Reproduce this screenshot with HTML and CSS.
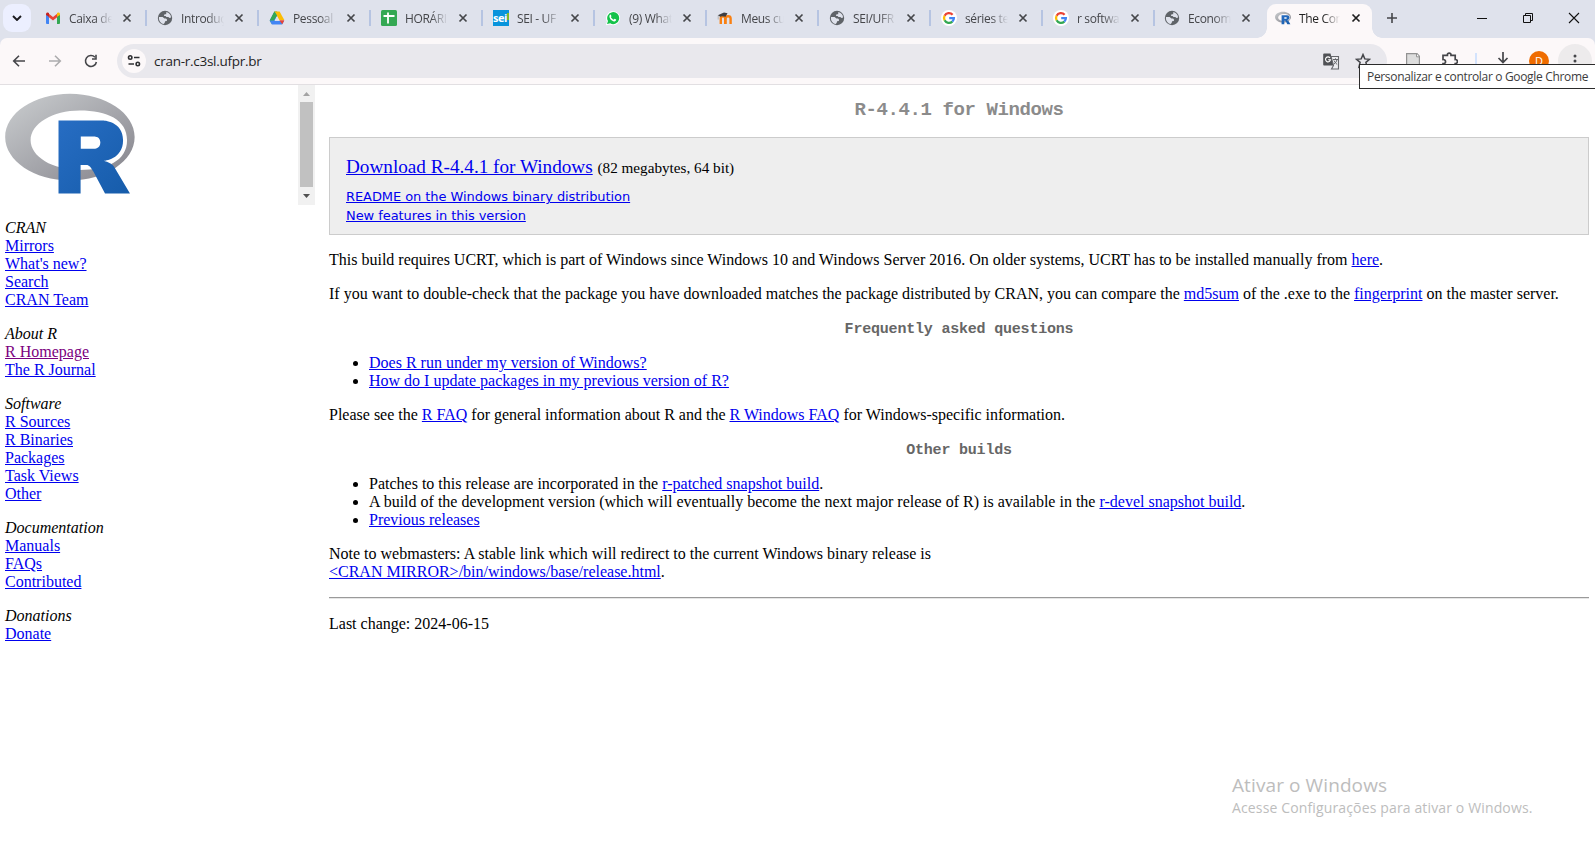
FILE: index.html
```html
<!DOCTYPE html>
<html lang="pt-BR">
<head>
<meta charset="utf-8">
<title>The Comprehensive R Archive Network</title>
<link rel="stylesheet" href="styles.css">
</head>
<body>
<svg class="defs" width="0" height="0" aria-hidden="true">
  <defs>
    <linearGradient id="ring" x1="0" y1="0" x2="1" y2="1"><stop offset="0" stop-color="#cbced0"/><stop offset="1" stop-color="#84838b"/></linearGradient>
    <linearGradient id="blue" x1="0" y1="0" x2="1" y2="1"><stop offset="0" stop-color="#276dc3"/><stop offset="1" stop-color="#165caa"/></linearGradient>
  </defs>
  <symbol id="rlogo" viewBox="0 0 724 561">
    <path fill="url(#ring)" fill-rule="evenodd" d="M361.5 486C162.300 486 .9 377.800.9 244.500S162.300 3 361.500 3 722 111.100 722 244.500 560.600 486 361.500 486ZM416.600 97.400c-151.300 0-274 73.900-274 165.100s122.700 165.100 274 165.100 263.100-50.600 263.100-165.100S568 97.400 416.600 97.400Z"/>
    <path fill="url(#blue)" fill-rule="evenodd" d="M550 377s21.800 6.600 34.500 13c4.400 2.200 12 6.700 17.500 12.500 5.400 5.700 8 11.500 8 11.500l86 145H557L492 437s-13.300-22.900-21.500-29.500c-6.800-5.500-9.700-7.500-16.500-7.500h-33v159H298V153h247s112.500 2 112.500 109S550 377 550 377ZM496.500 241H422v69h74.500s34.500-.1 34.500-35.100c0-35.700-34.500-33.900-34.500-33.900Z"/>
  </symbol>
  <symbol id="globe" viewBox="0 0 16 16">
    <circle cx="8" cy="8" r="7.200" fill="#5f6368"/>
    <path fill="#dfe2ec" d="M9.300 2.100c2.700.5 4.700 2.900 4.800 5.500l-1.600.4-1.200-1H9.500L8.600 6H7.300l-.4-.9 1-.8h1.300zM2 7h3.600l1.800 1.600h1.700l1 1.100-.3 1.200-1.700.4-.4 1.500-.9 1.200C4 13.700 2 11.200 1.900 8z"/>
  </symbol>
  <symbol id="google" viewBox="0 0 16 16">
    <circle cx="8" cy="8" r="8" fill="#fff"/>
    <g fill="none" stroke-width="2.300"><path stroke="#ea4335" d="M3.600 5.700A4.900 4.900 0 0 1 11.600 4.700"/><path stroke="#fbbc05" d="M3.600 10.300a4.900 4.900 0 0 1 0-4.600"/><path stroke="#34a853" d="M3.600 10.300a4.900 4.900 0 0 0 7.700 1.300"/><path stroke="#4285f4" d="M11.300 11.600A4.700 4.700 0 0 0 12.900 8.100H8.200"/></g>
  </symbol>
  <symbol id="close" viewBox="0 0 10 10"><path d="M1.500 1.500l7 7M8.500 1.500l-7 7" stroke="currentColor" stroke-width="1.700" fill="none"/></symbol>
</svg>

<header class="browser">
  <div class="tabstrip">
    <div class="tab-search"><svg width="10" height="6" viewBox="0 0 10 6"><path d="M1 1l4 4 4-4" fill="none" stroke="#1b1b1f" stroke-width="1.900"/></svg></div>
    <div class="tabs">
      <div class="tab"><svg class="fav" viewBox="0 0 16 16"><path fill="#4285f4" d="M1 4l3 2.300V14H2a1 1 0 0 1-1-1z"/><path fill="#34a853" d="M15 4l-3 2.300V14h2a1 1 0 0 0 1-1z"/><path fill="#ea4335" d="M3.500 3.500L8 7l4.500-3.500V7L8 10.400 3.500 7z"/><path fill="#c5221f" d="M1 4.200C1 2.500 2.800 2 4 3v3.800L1 4.900z"/><path fill="#fbbc04" d="M15 4.200C15 2.500 13.200 2 12 3v3.800l3-1.900z"/></svg><span class="title">Caixa de</span><svg class="x"><use href="#close"/></svg></div>
      <div class="tab"><svg class="fav"><use href="#globe"/></svg><span class="title">Introduç</span><svg class="x"><use href="#close"/></svg></div>
      <div class="tab"><svg class="fav" viewBox="0 0 16 16"><path fill="#34a853" d="M5.400 1.500H8L10 5 7.900 5.800 2.900 14 .8 11z"/><path fill="#fbbc04" d="M5.400 1.500h5.200L15.300 10h-5z"/><path fill="#4285f4" d="M.7 10.600l2.200 3.900h10.200l2-3.500H5.600L7.900 6 5.500 1.800z"/><path fill="#34a853" d="M5.400 1.500L.7 10.600l4.200-.1L8 5.600z"/><path fill="#dfe2ec" d="M8 6.400l2.300 4.100H5.700z"/><path fill="#ea4335" d="M10.300 10.200h5l-2 4z"/></svg><span class="title">Pessoal</span><svg class="x"><use href="#close"/></svg></div>
      <div class="tab"><svg class="fav" viewBox="0 0 16 16"><rect width="16" height="16" rx="1.500" fill="#34a853"/><path d="M2.500 6h11M7 2.500v11" stroke="#fff" stroke-width="1.800"/></svg><span class="title">HORÁRI</span><svg class="x"><use href="#close"/></svg></div>
      <div class="tab"><span class="fav sei">sei<i></i></span><span class="title">SEI - UF</span><svg class="x"><use href="#close"/></svg></div>
      <div class="tab"><svg class="fav" viewBox="0 0 16 16"><path fill="#fff" d="M.8 15.300L2 11.700a7 7 0 1 1 2.800 2.700z"/><path fill="#14c24a" d="M2 14.100l1-3a6 6 0 1 1 2.200 2.200z"/><path fill="#fff" d="M5.700 4.600l.8 1.600-.6.900c.6 1.300 1.500 2.100 2.800 2.600l.8-1 1.700.9c0 1.300-1 1.900-2 1.800C6.700 11 4.500 8.500 4.400 6.400c0-.9.5-1.700 1.300-1.800z"/></svg><span class="title">(9) What</span><svg class="x"><use href="#close"/></svg></div>
      <div class="tab"><svg class="fav" viewBox="0 0 16 16"><path d="M3.800 14V8.500c0-3 4.400-3 4.400 0V14M8.600 14V8.500c0-3 5-3 5 0V14" fill="none" stroke="#f98012" stroke-width="2.400"/><path fill="#3f3f42" d="M.8 5.200L7 2.400l3.500.8L8.600 6.700 5 6.200l-1.700.6z"/><path d="M1.200 5.500v4" stroke="#aaa" stroke-width=".8"/></svg><span class="title">Meus cu</span><svg class="x"><use href="#close"/></svg></div>
      <div class="tab"><svg class="fav"><use href="#globe"/></svg><span class="title">SEI/UFR</span><svg class="x"><use href="#close"/></svg></div>
      <div class="tab"><svg class="fav"><use href="#google"/></svg><span class="title">séries te</span><svg class="x"><use href="#close"/></svg></div>
      <div class="tab"><svg class="fav"><use href="#google"/></svg><span class="title">r softwa</span><svg class="x"><use href="#close"/></svg></div>
      <div class="tab last"><svg class="fav"><use href="#globe"/></svg><span class="title">Econom</span><svg class="x"><use href="#close"/></svg></div>
      <div class="tab active"><svg class="fav"><use href="#rlogo"/></svg><span class="title">The Con</span><svg class="x"><use href="#close"/></svg></div>
    </div>
    <svg class="newtab" viewBox="0 0 12 12"><path d="M6 1v10M1 6h10" stroke="#45464a" stroke-width="1.600"/></svg>
    <div class="winctl">
      <svg viewBox="0 0 12 12"><path d="M1 6.500h10" stroke="#111"/></svg>
      <svg viewBox="0 0 12 12"><path d="M1.500 3.500h7v7h-7zM3.500 3V1.500h7v7H9" stroke="#111" fill="none"/></svg>
      <svg viewBox="0 0 12 12"><path d="M1 1l10 10M11 1L1 11" stroke="#111" stroke-width="1.100"/></svg>
    </div>
  </div>
  <div class="toolbar">
    <div class="nav">
      <svg viewBox="0 0 14 14"><path d="M13 7H2M7 1.700L1.700 7 7 12.300" fill="none" stroke="#45464a" stroke-width="1.600"/></svg>
      <svg viewBox="0 0 14 14"><path d="M1 7h11M7 1.700L12.300 7 7 12.300" fill="none" stroke="#acacae" stroke-width="1.600"/></svg>
      <svg viewBox="0 0 14 14"><path d="M12.400 8A5.500 5.500 0 1 1 11 3.200" fill="none" stroke="#45464a" stroke-width="1.600"/><path d="M12.800.8v5H8V4.300h3.200V.8z" fill="#45464a"/></svg>
    </div>
    <div class="omnibox">
      <div class="siteinfo"><svg width="14" height="14" viewBox="0 0 14 14" fill="none" stroke="#303134" stroke-width="1.600"><circle cx="3.200" cy="3.500" r="1.700"/><path d="M7 3.500h5.500M1.500 10H7"/><circle cx="10.800" cy="10" r="1.700"/></svg></div>
      <span class="url">cran-r.c3sl.ufpr.br</span>
      <svg class="translate" viewBox="0 0 17 17"><path fill="#505155" d="M1 .5h6.500l3.300 12H1a1 1 0 0 1-.8-1V1.300A1 1 0 0 1 1 .5z"/><path d="M8 3.500h7.500v12.500H8.500l2-3.500z" fill="#ededf0" stroke="#66676b" stroke-width="1.100"/><path d="M7 4.800A2.500 2.500 0 1 0 7.500 6.700H5.200" stroke="#fff" stroke-width="1.100" fill="none"/><path d="M10 6.500h5M12.500 5.300v1.200M14 6.700c-.5 2-1.500 3.300-3 4.300M11 7.500c.8 1.800 1.900 3 3.200 4" stroke="#66676b" fill="none"/></svg>
      <svg class="star" viewBox="0 0 16 16"><path d="M8 1.600l1.800 4.300 4.700.4-3.600 3 1.100 4.600L8 11.500l-4 2.400 1.100-4.600-3.600-3 4.700-.4z" fill="none" stroke="#45464a" stroke-width="1.500"/></svg>
    </div>
    <div class="actions">
      <svg class="doc" viewBox="0 0 14 16"><path d="M.6.600H11l2.400 2.600v12H.6z" fill="#ddd" stroke="#929292" stroke-width="1.200"/><path d="M10.500.8v3h2.700" fill="#fff" stroke="#929292"/></svg>
      <svg class="puzzle" viewBox="0 0 16 18"><path d="M1 3.300h4.400C5 .4 9.300.4 9 3.300h4.200v4.200c3-.2 3 4 0 4V16H1v-4.300c3.400.3 3.400-4.400 0-4.200z" fill="none" stroke="#45464a" stroke-width="1.700"/></svg>
      <i class="divider"></i>
      <svg class="down" viewBox="0 0 12 18"><path d="M6 0v10M1.500 6L6 10.500 10.500 6M1 14.500h10" fill="none" stroke="#45464a" stroke-width="1.700"/></svg>
      <span class="avatar">D</span>
      <span class="menu"><svg width="4" height="14" viewBox="0 0 4 14" fill="#45464a"><circle cx="2" cy="2" r="1.500"/><circle cx="2" cy="7" r="1.500"/><circle cx="2" cy="12" r="1.500"/></svg></span>
    </div>
  </div>
  <div class="tooltip"><span>Personalizar e controlar o Google Chrome</span></div>
</header>

<div class="frames">
  <aside class="side">
    <div class="logo-frame">
      <svg class="logo"><use href="#rlogo"/></svg>
      <div class="scrollbar"><svg viewBox="0 0 7 4"><path d="M0 4h7L3.500 0z" fill="#a3a3a3"/></svg><i></i><svg viewBox="0 0 7 4"><path d="M0 0h7L3.500 4z" fill="#505050"/></svg></div>
    </div>
    <nav class="links">
      <div><em>CRAN</em><a>Mirrors</a><a>What's new?</a><a>Search</a><a>CRAN Team</a></div>
      <div><em>About R</em><a class="visited">R Homepage</a><a>The R Journal</a></div>
      <div><em>Software</em><a>R Sources</a><a>R Binaries</a><a>Packages</a><a>Task Views</a><a>Other</a></div>
      <div><em>Documentation</em><a>Manuals</a><a>FAQs</a><a>Contributed</a></div>
      <div><em>Donations</em><a>Donate</a></div>
    </nav>
  </aside>
  <main class="content">
    <h1>R-4.4.1 for Windows</h1>
    <section class="box">
      <p class="download"><a>Download R-4.4.1 for Windows</a> <span>(82 megabytes, 64 bit)</span></p>
      <p class="notes"><a>README on the Windows binary distribution</a><br><a>New features in this version</a></p>
    </section>
    <p>This build requires UCRT, which is part of Windows since Windows 10 and Windows Server 2016. On older systems, UCRT has to be installed manually from <a>here</a>.</p>
    <p>If you want to double-check that the package you have downloaded matches the package distributed by CRAN, you can compare the <a>md5sum</a> of the .exe to the <a>fingerprint</a> on the master server.</p>
    <h2>Frequently asked questions</h2>
    <ul><li><a>Does R run under my version of Windows?</a></li><li><a>How do I update packages in my previous version of R?</a></li></ul>
    <p>Please see the <a>R FAQ</a> for general information about R and the <a>R Windows FAQ</a> for Windows-specific information.</p>
    <h2>Other builds</h2>
    <ul><li>Patches to this release are incorporated in the <a>r-patched snapshot build</a>.</li><li>A build of the development version (which will eventually become the next major release of R) is available in the <a>r-devel snapshot build</a>.</li><li><a>Previous releases</a></li></ul>
    <p>Note to webmasters: A stable link which will redirect to the current Windows binary release is<br><a>&lt;CRAN MIRROR&gt;/bin/windows/base/release.html</a>.</p>
    <hr>
    <p>Last change: 2024-06-15</p>
  </main>
</div>
<div class="watermark"><div class="wm-title">Ativar o Windows</div><div class="wm-text">Acesse Configurações para ativar o Windows.</div></div>
</body>
</html>
```
FILE: styles.css
```css
* { box-sizing: border-box; }
html, body { margin: 0; height: 100%; }
body { position: relative; background: #fff; overflow: hidden; color: #000; font: 16px/18px "Liberation Serif", "Times New Roman", serif; }
svg { display: block; flex: none; }
.defs { position: absolute; }

/* Browser chrome */
.browser { position: relative; height: 85px; background: #dfe2ec; border-bottom: 1px solid #e2dfe2; font-family: "Open Sans", "Noto Sans", sans-serif; }
.tabstrip { display: flex; height: 38px; }
.tab-search { display: flex; align-items: center; justify-content: center; width: 28px; height: 28px; margin: 4px 0 0 3px; border-radius: 9px; background: #ecefff; }
.tabs { display: flex; margin-left: 3px; }
.tab { position: relative; display: flex; align-items: center; width: 112px; height: 36px; padding-left: 11px; color: #45464a; }
.tab:not(.last):not(.active)::after { content: ""; position: absolute; right: -1px; top: 10px; width: 2px; height: 16px; background: #b6c4e2; }
.tab.last { width: 113px; padding-left: 10px; }
.tab.active { width: 105px; height: 34px; margin-top: 4px; padding: 0 0 6px 8px; background: #fcf8f9; border-radius: 9px 9px 0 0; color: #1f1f1f; }
.tab.active::before, .tab.active::after { content: ""; position: absolute; bottom: 0; width: 10px; height: 10px; }
.tab.active::before { left: -10px; background: radial-gradient(circle at 0 0, transparent 9.500px, #fcf8f9 10px); }
.tab.active::after { right: -10px; background: radial-gradient(circle at 100% 0, transparent 9.500px, #fcf8f9 10px); }
.fav { width: 16px; height: 16px; flex: none; }
.sei { position: relative; background: #0894dc; color: #fff; font: bold 11px/15px "Open Sans", sans-serif; letter-spacing: -.5px; text-align: left; overflow: hidden; }
.sei i { position: absolute; right: 0; top: 3px; width: 2px; height: 7px; background: #7db928; }
.title { width: 43px; margin: 1px 0 0 8px; overflow: hidden; white-space: nowrap; font-size: 12px; line-height: 18px; letter-spacing: -.35px; -webkit-mask-image: linear-gradient(90deg, #000 60%, transparent 100%); mask-image: linear-gradient(90deg, #000 60%, transparent 100%); }
.x { width: 10px; height: 10px; margin-left: 10px; }
.tab.active .title { width: 41px; }
.tab.active .x { margin-left: 11px; }
.newtab { width: 12px; height: 12px; margin: 12px 0 0 14px; }
.winctl { display: flex; gap: 34px; margin: 12px 0 0 78px; }
.winctl svg { width: 12px; height: 12px; }
.toolbar { display: flex; align-items: center; height: 46px; background: #fcf8f9; border-radius: 7px 7px 0 0; }
.nav { display: flex; gap: 22px; width: 117px; padding-left: 12px; }
.nav svg { width: 14px; height: 14px; }
.omnibox { display: flex; align-items: center; width: 1270px; height: 34px; padding-left: 5px; border-radius: 17px; background: #e9e8ed; }
.siteinfo { display: flex; align-items: center; justify-content: center; width: 24px; height: 24px; border-radius: 50%; background: #fcf8f9; }
.url { flex: 1; margin-left: 8px; font-size: 13.500px; line-height: 20px; letter-spacing: -.27px; color: #1f1f1f; }
.translate { width: 17px; height: 17px; margin-right: 15px; }
.star { width: 16px; height: 16px; margin-right: 16px; }
.actions { display: flex; align-items: center; flex: 1; padding-left: 19px; }
.doc { width: 14px; height: 16px; }
.puzzle { width: 16px; height: 18px; margin-left: 22px; }
.divider { width: 2px; height: 16px; margin-left: 17px; background: #d3e3fd; }
.down { width: 12px; height: 18px; margin-left: 20px; }
.avatar { width: 20px; height: 20px; margin-left: 20px; border-radius: 50%; background: #ef6c00; color: #fff; font-size: 11px; line-height: 20px; text-align: center; }
.menu { display: flex; align-items: center; justify-content: center; flex: none; width: 34px; height: 34px; margin-left: 9px; border-radius: 50%; background: #edebec; }
.tooltip { position: absolute; left: 1359px; top: 64px; width: 240px; height: 25px; padding-left: 7px; border: 1px solid #2b2b2b; background: #fff; color: #3c3c3c; font-size: 12px; line-height: 24px; letter-spacing: -.33px; white-space: nowrap; }

/* Frameset */
.frames { display: flex; }
.side { width: 315px; }
.logo-frame { display: flex; justify-content: space-between; height: 120px; padding-left: 5px; }
.logo { width: 130px; height: 101px; margin-top: 8px; }
.scrollbar { display: flex; flex-direction: column; align-items: center; justify-content: space-between; width: 17px; height: 120px; padding: 7px 0; background: #f1f1f1; }
.scrollbar svg { width: 7px; height: 4px; }
.scrollbar i { width: 13px; height: 85px; margin-bottom: 1px; background: #c1c1c1; }
.links { display: flex; flex-direction: column; gap: 16px; padding: 14px 0 0 5px; }
.links div { display: flex; flex-direction: column; align-items: flex-start; }
a { color: #00e; text-decoration: underline; }
a.visited { color: #7b0080; }
.content { width: 1260px; margin-left: 14px; }
.content p { margin: 0 0 16px; white-space: nowrap; }
.content h1, .content h2 { font-family: "Liberation Mono", monospace; font-weight: bold; text-align: center; }
.content h1 { margin: 14px 0 15px; font-size: 19px; line-height: 23px; letter-spacing: -.400px; color: #8b8b8b; }
.content h2 { margin: 0 0 13px; font-size: 15px; line-height: 22px; letter-spacing: -.200px; color: #666; }
.box { height: 98px; margin-bottom: 16px; padding: 18px 16px 0; border: 1px solid #ccc; background: #eee; }
.content .download { margin: 0; font-size: 19.200px; line-height: 22px; }
.download span { font-size: 15.200px; }
.content .notes { margin: 8px 0 0; font: 13px/19px "DejaVu Sans", Verdana, sans-serif; letter-spacing: -.07px; }
.content ul { margin: 0 0 16px; padding-left: 40px; }
.content hr { height: 2px; margin: 0 0 16px; border: 0; border-top: 1px solid #9a9a9a; border-bottom: 1px solid #e6e6e6; }

/* Activation overlay */
.watermark { position: absolute; left: 1232px; top: 771px; color: #bdbdbd; font-family: "Open Sans", sans-serif; white-space: nowrap; }
.wm-title { font-size: 19px; line-height: 28px; letter-spacing: .1px; }
.wm-text { font-size: 14px; line-height: 18px; letter-spacing: .14px; }
```
